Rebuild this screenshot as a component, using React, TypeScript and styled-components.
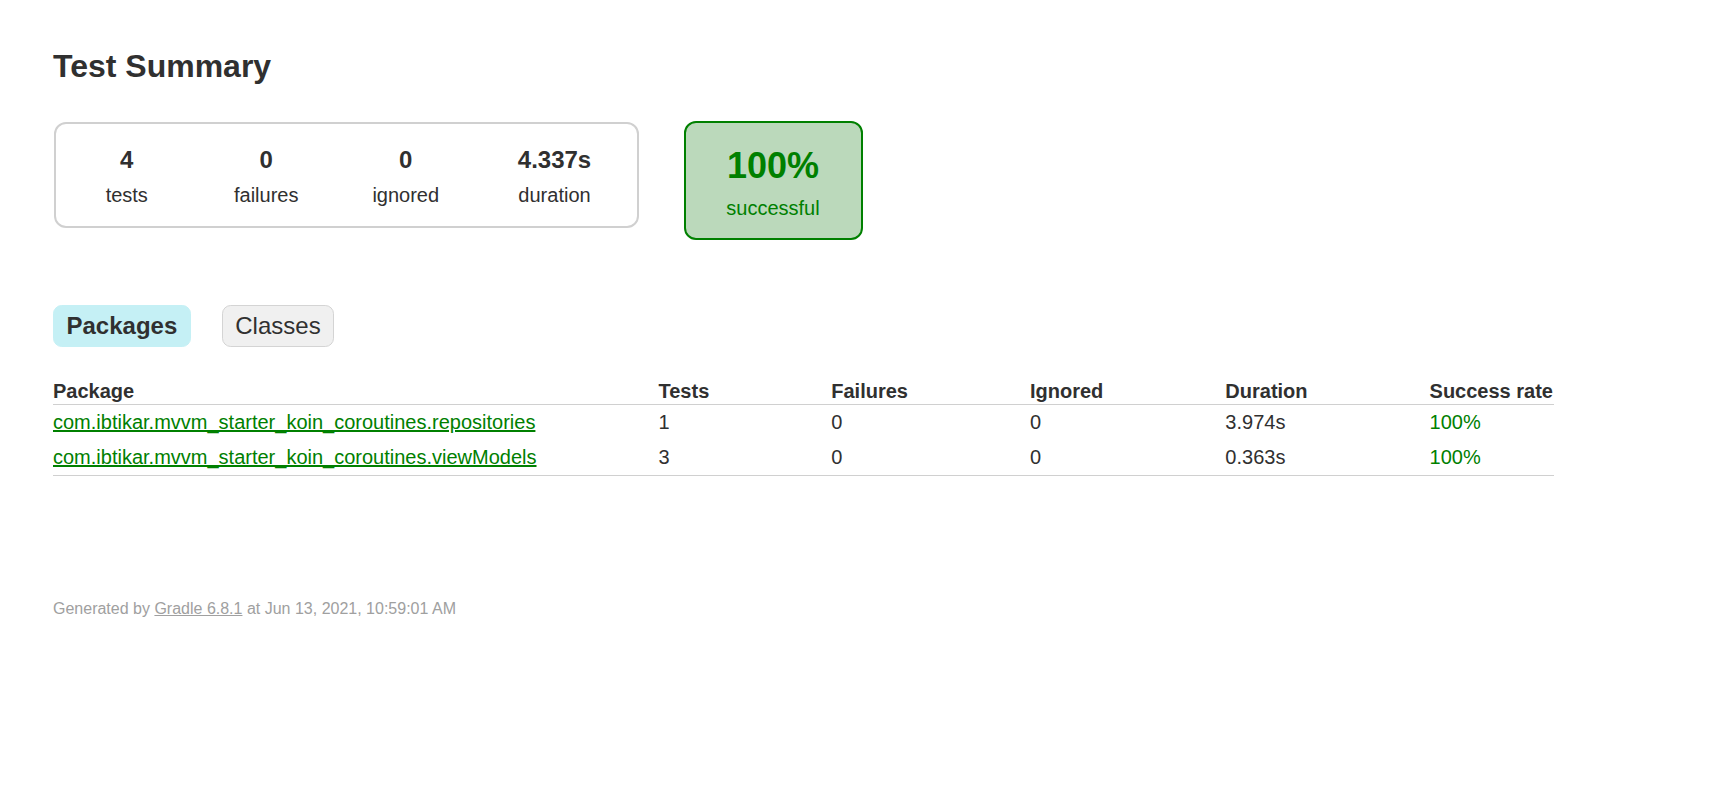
import React from 'react'
import styled, { createGlobalStyle } from 'styled-components'

const GlobalStyle = createGlobalStyle`
  body {
    margin: 0;
    padding: 0;
    background: #ffffff;
    color: #303030;
    font-family: "Liberation Sans", Arial, sans-serif;
    font-size: 20px;
  }
`

interface PackageRow {
  name: string
  tests: number
  failures: number
  ignored: number
  duration: string
  successRate: string
}

const packages: PackageRow[] = [
  {
    name: 'com.ibtikar.mvvm_starter_koin_coroutines.repositories',
    tests: 1,
    failures: 0,
    ignored: 0,
    duration: '3.974s',
    successRate: '100%',
  },
  {
    name: 'com.ibtikar.mvvm_starter_koin_coroutines.viewModels',
    tests: 3,
    failures: 0,
    ignored: 0,
    duration: '0.363s',
    successRate: '100%',
  },
]

const counters = [
  { value: '4', label: 'tests' },
  { value: '0', label: 'failures' },
  { value: '0', label: 'ignored' },
  { value: '4.337s', label: 'duration', wide: true },
]

const App = () => {
  return (
    <Content>
      <GlobalStyle />
      <Title>Test Summary</Title>
      <Summary>
        <SummaryGroup>
          {counters.map((c) => (
            <InfoBox key={c.label} $wide={c.wide}>
              <Counter>{c.value}</Counter>
              <Label>{c.label}</Label>
            </InfoBox>
          ))}
        </SummaryGroup>
        <SuccessRate>
          <Percent>100%</Percent>
          <Label>successful</Label>
        </SuccessRate>
      </Summary>
      <TabLinks>
        <Tab $selected>Packages</Tab>
        <Tab>Classes</Tab>
      </TabLinks>
      <Table>
        <thead>
          <tr>
            <Th>Package</Th>
            <Th>Tests</Th>
            <Th>Failures</Th>
            <Th>Ignored</Th>
            <Th>Duration</Th>
            <Th>Success rate</Th>
          </tr>
        </thead>
        <tbody>
          {packages.map((p) => (
            <tr key={p.name}>
              <Td>
                <PackageLink href="#">{p.name}</PackageLink>
              </Td>
              <Td>{p.tests}</Td>
              <Td>{p.failures}</Td>
              <Td>{p.ignored}</Td>
              <Td>{p.duration}</Td>
              <Td $success>{p.successRate}</Td>
            </tr>
          ))}
        </tbody>
      </Table>
      <Footer>
        Generated by <FooterLink href="#">Gradle 6.8.1</FooterLink> at Jun 13,
        2021, 10:59:01 AM
      </Footer>
    </Content>
  )
}

const Content = styled.div`
  padding: 48px 53px 40px;
`

const Title = styled.h1`
  margin: 0;
  font-size: 32px;
  font-weight: bold;
  white-space: nowrap;
`

const Summary = styled.div`
  display: flex;
  align-items: flex-start;
  margin: 36px 0 50px 1px;
`

const SummaryGroup = styled.div`
  display: flex;
  margin-top: 1px;
  padding: 0 3px 0 1px;
  border: solid 2px #d0d0d0;
  border-radius: 12px;
`

const InfoBox = styled.div<{ $wide?: boolean }>`
  width: ${(p) => (p.$wide ? '158px' : '139.5px')};
  padding: 22px 0 18.5px;
  text-align: center;
`

const Counter = styled.p`
  margin: 0 0 10px;
  font-size: 24px;
  font-weight: bold;
`

const Label = styled.p`
  margin: 0;
`

const SuccessRate = styled.div`
  width: 175px;
  margin-left: 45px;
  padding: 22px 0 18px;
  text-align: center;
  color: #008000;
  background-color: #bbd9bb;
  border: solid 2px #008000;
  border-radius: 12px;
`

const Percent = styled.p`
  margin: 0 0 10px;
  font-size: 36px;
  font-weight: bold;
`

const TabLinks = styled.ul`
  display: flex;
  list-style: none;
  margin: 0 0 20px;
  padding: 14.5px 0 12px;
`

const Tab = styled.li<{ $selected?: boolean }>`
  padding: 6.25px 12.5px;
  margin-right: 31px;
  font-size: 24px;
  font-weight: ${(p) => (p.$selected ? 'bold' : 'normal')};
  border: solid 1px ${(p) => (p.$selected ? '#c5f0f5' : '#d4d4d4')};
  background-color: ${(p) => (p.$selected ? '#c5f0f5' : '#f0f0f0')};
  border-radius: 8.75px;
`

const Table = styled.table`
  border-collapse: collapse;
  border-bottom: solid 1px #d0d0d0;
`

const Th = styled.th`
  text-align: left;
  white-space: nowrap;
  padding: 1px 1px 1px 121px;
  border-bottom: solid 1px #d0d0d0;

  &:first-child {
    padding-left: 0;
  }
`

const Td = styled.td<{ $success?: boolean }>`
  white-space: nowrap;
  padding: 6px 1px 6px 121px;
  color: ${(p) => (p.$success ? '#008000' : '#303030')};

  &:first-child {
    padding-left: 0;
  }
`

const PackageLink = styled.a`
  color: #008000;
  text-decoration: underline;
`

const Footer = styled.div`
  margin-top: 124px;
  font-size: 16px;
  white-space: nowrap;
  color: #a0a0a0;
`

const FooterLink = styled.a`
  color: #a0a0a0;
  text-decoration: underline;
`

export default App
